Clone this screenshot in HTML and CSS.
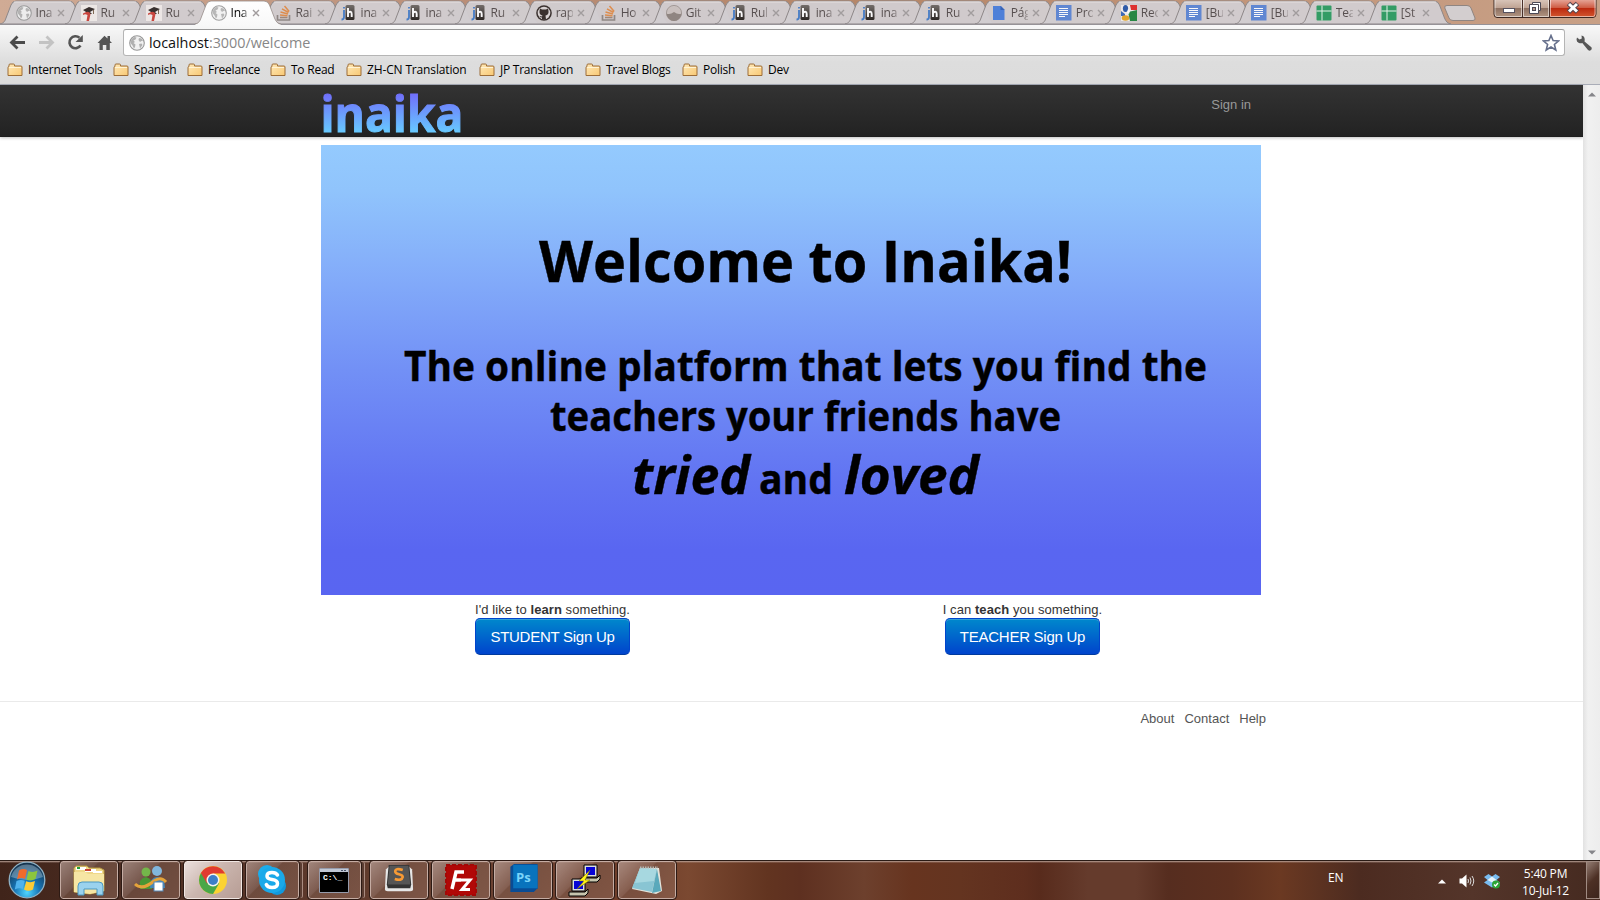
FILE: index.html
```html
<!DOCTYPE html>
<html lang="en">
<head>
<meta charset="utf-8">
<title>Inaika</title>
<link rel="stylesheet" href="styles.css">
</head>
<body>
<svg class="defs" width="0" height="0">
  <defs>
    <linearGradient id="gFolder" x1="0" y1="0" x2="1" y2="1"><stop offset="0" stop-color="#ffe9b8"/><stop offset="1" stop-color="#f8c873"/></linearGradient>
    <linearGradient id="gDark" x1="0" y1="0" x2="0" y2="1"><stop offset="0" stop-color="#6a6460"/><stop offset="1" stop-color="#1c1613"/></linearGradient>
    <linearGradient id="gActive" x1="0" y1="0" x2="0" y2="1"><stop offset="0" stop-color="#fff"/><stop offset="1" stop-color="#f8f8f8"/></linearGradient>
    <radialGradient id="gOrb" cx=".5" cy=".85" r=".8"><stop offset="0" stop-color="#4fd6ff"/><stop offset=".45" stop-color="#1673b4"/><stop offset="1" stop-color="#15344f"/></radialGradient>
  </defs>
  <symbol id="tab" viewBox="0 0 86 24"><path d="M0 24C4 23 5 21 6 18L11 5Q12.5 1 16 1H69Q73 1 74.500 5L79.500 18Q81.500 23.500 86 24Z" fill="#d1cdd0" fill-opacity=".96" stroke="#8d8788"/><path d="M14 2H71" stroke="#e6e0e0"/></symbol>
  <symbol id="tabOn" viewBox="0 0 86 25"><path d="M0 24.500C4 23.500 5 21 6 18L11 5Q12.500 1 16 1H69Q73 1 74.500 5L79.500 18Q81.500 24 86 24.500V25H0Z" fill="url(#gActive)"/><path d="M0 24C4 23 5 21 6 18L11 5Q12.500 1 16 1H69Q73 1 74.500 5L79.500 18Q81.500 23.500 86 24" fill="none" stroke="#968c88" stroke-width=".8"/></symbol>
  <symbol id="globe" viewBox="0 0 16 16"><circle cx="8" cy="8" r="7.300" fill="#f1f1f1" stroke="#969696" stroke-width="1.100"/><path d="M2.500 4L5.500 2 7.500 2.500 6.500 4.500 4.500 5.500 6 7 4.500 8 6.500 9.500 6 12 5 13.500 3.500 10.500 1.500 8ZM10 3L12.500 3.500 14 6 12.500 6 11 7 9.500 5ZM10 9L12.500 8.500 13.500 10 11 13.500 10.500 11Z" fill="#b0b0b0"/></symbol>
  <symbol id="grad" viewBox="0 0 16 16"><path d="M0 0H16V16H0Z" fill="#f0eae8"/><path d="M2 5L8 2 14 4 9 7 11 9 5 9 5 7Z" fill="#28201e"/><path d="M2 8.500Q8 5 9.500 9L8 16H5.500L6.500 10Q4 8.500 2 10Z" fill="#c8372f"/><path d="M12.500 5V9" stroke="#786048"/></symbol>
  <symbol id="so" viewBox="0 0 16 16"><path d="M1.500 10V15H13.500V10" fill="none" stroke="#88807e" stroke-width="1.700"/><path d="M4 12.500H11.500" stroke="#9a8070" stroke-width="1.600"/><path d="M4 10L11.500 10.700M4.500 7L12 9M6 3.800L12.500 7.500M8.500 1L13.200 6.500" stroke="#df8741" stroke-width="1.500"/></symbol>
  <symbol id="jh" viewBox="0 0 16 16"><rect x="4.500" y="0" width="9" height="15" rx="1.500" fill="url(#gDark)"/><path d="M3 5V12Q3 14.500 .5 14.500M3 2V3.600" fill="none" stroke="#3774c6" stroke-width="1.800"/><path d="M7 3V12M7 8Q8 6.500 9.500 6.800 10.700 7 10.700 9V12" fill="none" stroke="#fff" stroke-width="1.900"/></symbol>
  <symbol id="gh" viewBox="0 0 16 16"><circle cx="8" cy="8" r="7.800" fill="#2a211e"/><circle cx="8" cy="8" r="6.300" fill="#d8d2d2"/><path d="M4 3.500L6 4.600H10L12 3.500 12.500 6Q13 10 9.500 10.400L10 14.500H6V12.600Q4 12.600 3.500 11L6 11.500 6.500 10.400Q3 10 3.500 6Z" fill="#2a211e"/></symbol>
  <symbol id="gitb" viewBox="0 0 16 16"><circle cx="8" cy="8" r="7.600" fill="#c9c0bd" stroke="#928884" stroke-width=".8"/><path d="M.5 8.500Q4 10 8 7 12 10 15.500 8.500A7.500 7.500 0 0 1 .5 8.500Z" fill="#897e79"/></symbol>
  <symbol id="page" viewBox="0 0 16 16"><path d="M2 1H10L13.500 4.500V15H2Z" fill="#4178da"/><path d="M9.500 1V5H13.500Z" fill="#2858b0"/></symbol>
  <symbol id="doc" viewBox="0 0 16 16"><path d="M0 0H15.500V15.500H0Z" fill="#5480d3"/><path d="M3 3.500H12M3 5.500H12M3 7.500H12M3 9.500H12M3 11.500H9" stroke="#fff"/></symbol>
  <symbol id="goo" viewBox="0 0 16 16"><path d="M0 0H16V16H0Z" fill="#f2eeee"/><path d="M9 0H16V5H10Z" fill="#df201d"/><path d="M7 7L16 5V16H9Z" fill="#168036"/><path d="M0 6L4 9V11H0Z" fill="#2f61b5"/><ellipse cx="4.500" cy="3.500" rx="2.600" ry="3.500" fill="#1f51a5"/><ellipse cx="4.500" cy="13" rx="3.800" ry="2.700" fill="#e3a21c"/><path d="M7 4L9 6 8 9 6 8Z" fill="#fff"/></symbol>
  <symbol id="sheet" viewBox="0 0 16 16"><rect x=".5" y=".5" width="15" height="15" rx="1" fill="#23985a"/><path d="M6 .5V15.500M.5 6H15.500" stroke="#e8f5ec"/></symbol>
  <symbol id="x" viewBox="0 0 8 8"><path d="M1 1L7 7M7 1L1 7" stroke="#a19c9d" stroke-width="1.400"/></symbol>
  <symbol id="folder" viewBox="0 0 16 14"><path d="M1 12.500V4.500Q1 3.500 2 3.500V2Q2 1 3 1H6.500Q7.500 1 7.500 2V3H14Q15 3 15 4V12.500Z" fill="url(#gFolder)" stroke="#9c6d38"/><path d="M2 4.500H14" stroke="#fff3d5"/></symbol>
</svg>

<header class="browser">
  <div class="titlebar">
    <nav class="tabs">
      <div class="tab"><svg class="shape"><use href="#tab"/></svg><svg class="fav"><use href="#globe"/></svg><span>Ina</span><svg class="close"><use href="#x"/></svg></div>
      <div class="tab"><svg class="shape"><use href="#tab"/></svg><svg class="fav"><use href="#grad"/></svg><span>Ru</span><svg class="close"><use href="#x"/></svg></div>
      <div class="tab"><svg class="shape"><use href="#tab"/></svg><svg class="fav"><use href="#grad"/></svg><span>Ru</span><svg class="close"><use href="#x"/></svg></div>
      <div class="tab on"><svg class="shape"><use href="#tabOn"/></svg><svg class="fav"><use href="#globe"/></svg><span>Ina</span><svg class="close"><use href="#x"/></svg></div>
      <div class="tab"><svg class="shape"><use href="#tab"/></svg><svg class="fav"><use href="#so"/></svg><span>Rai</span><svg class="close"><use href="#x"/></svg></div>
      <div class="tab"><svg class="shape"><use href="#tab"/></svg><svg class="fav"><use href="#jh"/></svg><span>ina</span><svg class="close"><use href="#x"/></svg></div>
      <div class="tab"><svg class="shape"><use href="#tab"/></svg><svg class="fav"><use href="#jh"/></svg><span>ina</span><svg class="close"><use href="#x"/></svg></div>
      <div class="tab"><svg class="shape"><use href="#tab"/></svg><svg class="fav"><use href="#jh"/></svg><span>Ru</span><svg class="close"><use href="#x"/></svg></div>
      <div class="tab"><svg class="shape"><use href="#tab"/></svg><svg class="fav"><use href="#gh"/></svg><span>rap</span><svg class="close"><use href="#x"/></svg></div>
      <div class="tab"><svg class="shape"><use href="#tab"/></svg><svg class="fav"><use href="#so"/></svg><span>Ho</span><svg class="close"><use href="#x"/></svg></div>
      <div class="tab"><svg class="shape"><use href="#tab"/></svg><svg class="fav"><use href="#gitb"/></svg><span>Git</span><svg class="close"><use href="#x"/></svg></div>
      <div class="tab"><svg class="shape"><use href="#tab"/></svg><svg class="fav"><use href="#jh"/></svg><span>Rul</span><svg class="close"><use href="#x"/></svg></div>
      <div class="tab"><svg class="shape"><use href="#tab"/></svg><svg class="fav"><use href="#jh"/></svg><span>ina</span><svg class="close"><use href="#x"/></svg></div>
      <div class="tab"><svg class="shape"><use href="#tab"/></svg><svg class="fav"><use href="#jh"/></svg><span>ina</span><svg class="close"><use href="#x"/></svg></div>
      <div class="tab"><svg class="shape"><use href="#tab"/></svg><svg class="fav"><use href="#jh"/></svg><span>Ru</span><svg class="close"><use href="#x"/></svg></div>
      <div class="tab"><svg class="shape"><use href="#tab"/></svg><svg class="fav"><use href="#page"/></svg><span>Pág</span><svg class="close"><use href="#x"/></svg></div>
      <div class="tab"><svg class="shape"><use href="#tab"/></svg><svg class="fav"><use href="#doc"/></svg><span>Pro</span><svg class="close"><use href="#x"/></svg></div>
      <div class="tab"><svg class="shape"><use href="#tab"/></svg><svg class="fav"><use href="#goo"/></svg><span>Rec</span><svg class="close"><use href="#x"/></svg></div>
      <div class="tab"><svg class="shape"><use href="#tab"/></svg><svg class="fav"><use href="#doc"/></svg><span>[Bu</span><svg class="close"><use href="#x"/></svg></div>
      <div class="tab"><svg class="shape"><use href="#tab"/></svg><svg class="fav"><use href="#doc"/></svg><span>[Bu</span><svg class="close"><use href="#x"/></svg></div>
      <div class="tab"><svg class="shape"><use href="#tab"/></svg><svg class="fav"><use href="#sheet"/></svg><span>Tea</span><svg class="close"><use href="#x"/></svg></div>
      <div class="tab"><svg class="shape"><use href="#tab"/></svg><svg class="fav"><use href="#sheet"/></svg><span>[St</span><svg class="close"><use href="#x"/></svg></div>
    </nav>
    <svg class="newtab" width="32" height="16"><path d="M3 .5H23Q26 .5 27 3L31 13Q31.500 15.500 29 15.500H9Q6 15.500 5 13L.8 3Q0 .5 3 .5Z" fill="#d3cecf" stroke="#8f8581"/></svg>
    <svg class="winctl" width="104" height="19">
      <defs><linearGradient id="gWin" x1="0" y1="0" x2="0" y2="1"><stop offset="0" stop-color="#dbc8bd"/><stop offset=".48" stop-color="#bfa393"/><stop offset=".5" stop-color="#8c6f60"/><stop offset="1" stop-color="#b49784"/></linearGradient>
      <linearGradient id="gRed" x1="0" y1="0" x2="0" y2="1"><stop offset="0" stop-color="#e5a294"/><stop offset=".46" stop-color="#ce5b43"/><stop offset=".5" stop-color="#bc2a10"/><stop offset="1" stop-color="#d2562e"/></linearGradient></defs>
      <path d="M1 -1V14Q1 17.500 4 17.500H100Q103 17.500 103 14V-1Z" fill="url(#gWin)" stroke="#3d2822"/>
      <path d="M56 0H102.500V14Q102.500 17 100 17H56Z" fill="url(#gRed)"/>
      <path d="M29.500 0V17M56.500 0V17" stroke="#49302a"/><path d="M2 0V14Q2 16.500 4 16.500H28.500V0M30.500 0V16.500H55.500V0M57.500 0V16.500H100Q102 16.500 102 14V0" fill="none" stroke="#fff" stroke-opacity=".55"/>
      <rect x="10.500" y="8.500" width="11" height="4" fill="#fff" stroke="#565260"/>
      <path d="M39.500 2.500H47.500V10.500H45.500V13.500H36.500V4.500H39.500Z" fill="#fff" stroke="#4c4955"/><path d="M39.500 4.500H45.500V10.500" fill="none" stroke="#4c4955"/><rect x="39.500" y="7.500" width="3" height="3" fill="#b79a8b" stroke="#4c4955"/>
      <path d="M75.500 3.500L84.500 12M84.500 3.500L75.500 12" stroke="#52454e" stroke-width="5"/><path d="M76 4L84 11.500M84 4L76 11.500" stroke="#fff" stroke-width="3"/>
    </svg>
  </div>
  <div class="toolbar">
    <svg class="navicons" width="124" height="34">
      <path d="M25 17.500H12M17.500 11.500L11.500 17.500 17.500 23.500" fill="none" stroke="#4b4b4b" stroke-width="2.800"/>
      <path d="M39 17.500H52M46.500 11.500L52.500 17.500 46.500 23.500" fill="none" stroke="#c3c3c3" stroke-width="2.800"/>
      <path d="M80.500 20.500A6 6 0 1 1 79.500 12.800" fill="none" stroke="#555" stroke-width="2.600"/><path d="M82.800 10V17H75.500Z" fill="#555"/>
      <path d="M97.500 18L104.500 10.700 107.500 13.500V11H110V16L112 18H109.800V25H106.300V20H102.800V25H99.500V18Z" fill="#555"/>
    </svg>
    <div class="omnibox">
      <svg class="site"><use href="#globe"/></svg><p class="url"><b>localhost</b>:3000/welcome</p>
      <svg class="star" width="18" height="18" viewBox="0 0 18 18"><path d="M9 1.500L11.100 6.500 16.600 6.900 12.400 10.500 13.800 16 9 13 4.200 16 5.600 10.500 1.400 6.900 6.900 6.500Z" fill="#fff" stroke="#656f8b" stroke-width="1.600"/></svg>
    </div>
    <svg class="wrench" width="16" height="16" viewBox="0 0 16 16"><path d="M5.500.5L5.800 3.500 3.500 4.500 1 2.500Q-.5 6.500 3 8 5 8.500 6.300 8L12 15Q14.200 16.500 15.500 14.500 16.300 12.500 14.500 11.500L8.500 6.500Q9.500 1 5.500.5Z" fill="#575757"/></svg>
  </div>
  <nav class="bookmarks">
    <a><svg><use href="#folder"/></svg>Internet Tools</a>
    <a><svg><use href="#folder"/></svg>Spanish</a>
    <a><svg><use href="#folder"/></svg>Freelance</a>
    <a><svg><use href="#folder"/></svg>To Read</a>
    <a><svg><use href="#folder"/></svg>ZH-CN Translation</a>
    <a><svg><use href="#folder"/></svg>JP Translation</a>
    <a><svg><use href="#folder"/></svg>Travel Blogs</a>
    <a><svg><use href="#folder"/></svg>Polish</a>
    <a><svg><use href="#folder"/></svg>Dev</a>
  </nav>
</header>

<div class="viewport">
  <div class="site-page">
    <div class="navbar">
      <div class="container">
        <svg class="logo" width="150" height="52" viewBox="0 0 150 52">
          <defs><linearGradient id="gLogo" gradientUnits="userSpaceOnUse" x1="0" y1="9" x2="0" y2="48"><stop offset="0" stop-color="#706ffb"/><stop offset="1" stop-color="#67cbff"/></linearGradient></defs>
          <text x="-.5" y="47" textLength="143" lengthAdjust="spacingAndGlyphs" fill="url(#gLogo)" stroke="url(#gLogo)">inaika</text>
        </svg>
        <a class="signin">Sign in</a>
      </div>
    </div>
    <main class="container">
      <svg class="hero" width="940" height="450" viewBox="321 145 940 450">
        <defs><linearGradient id="gHero" x1="0" y1="0" x2="0" y2="1"><stop offset="0" stop-color="#94cafe"/><stop offset=".1" stop-color="#90c4fc"/><stop offset=".25" stop-color="#86b1fa"/><stop offset=".5" stop-color="#7290f6"/><stop offset=".75" stop-color="#6173f2"/><stop offset=".9" stop-color="#5966f1"/><stop offset="1" stop-color="#5965f1"/></linearGradient></defs>
        <rect x="321" y="145" width="940" height="450" fill="url(#gHero)"/>
        <text x="539" y="282" font-size="57" textLength="533" lengthAdjust="spacingAndGlyphs">Welcome to Inaika!</text>
        <text x="404" y="381" font-size="40.500" textLength="803" lengthAdjust="spacingAndGlyphs">The online platform that lets you find the</text>
        <text x="550" y="430.500" font-size="40.500" textLength="511" lengthAdjust="spacingAndGlyphs">teachers your friends have</text>
        <text class="it" x="632" y="493.500" font-size="52" textLength="118" lengthAdjust="spacingAndGlyphs">tried</text>
        <text x="759" y="493.500" font-size="40.500" textLength="74" lengthAdjust="spacingAndGlyphs">and</text>
        <text class="it" x="844" y="493.500" font-size="52" textLength="135" lengthAdjust="spacingAndGlyphs">loved</text>
      </svg>
      <div class="signup">
        <div><p>I'd like to <b>learn</b> something.</p><a class="btn">STUDENT Sign Up</a></div>
        <div><p>I can <b>teach</b> you something.</p><a class="btn">TEACHER Sign Up</a></div>
      </div>
    </main>
    <footer><a>About</a><a>Contact</a><a>Help</a></footer>
  </div>
  <div class="scrollbar">
    <svg width="8" height="5"><path d="M0 4.500L4 .5 8 4.500Z" fill="#85858a"/></svg>
    <svg width="8" height="5"><path d="M0 .5L4 4.500 8 .5Z" fill="#85858a"/></svg>
  </div>
</div>

<div class="taskbar">
  <svg class="orb" width="38" height="38" viewBox="0 0 38 38"><circle cx="19" cy="19" r="17.800" fill="url(#gOrb)" stroke="#8fb1c4" stroke-width="1.300"/><path d="M3 16A16.500 16.500 0 0 1 35 16Q20 22 3 16Z" fill="#c5dcea" fill-opacity=".38"/><path d="M11 9.500Q15 7 19 9L17 18Q13 16 9 18.500Z" fill="#f06b2c"/><path d="M20.500 10Q25 12 29.500 9.500L27.500 18Q23 20.500 18.500 18.500Z" fill="#8cc63d"/><path d="M8.500 20Q13 18 16.800 19.800L14.800 28Q11 26.500 6.800 28.500Z" fill="#4fb2ed"/><path d="M18.200 20.200Q22.500 22.200 27 20L25 28.500Q20.500 31 16 28.500Z" fill="#fccb35"/></svg>
  <div class="tasks">
    <div class="task">
      <svg width="36" height="32" viewBox="0 0 36 32"><path d="M3 4L5 2H16L18 4H29L33 6V27L19 30 3 28Z" fill="#efd88a" stroke="#b6963f"/><path d="M5 3H15V6H5ZM14 5H25V8H14ZM22 7H31V9H22Z" fill="#fff"/><path d="M6 3H9V5H6Z" fill="#23a03a"/><path d="M14 5H20V7H14Z" fill="#ca4433"/><path d="M3 8H14L17 10H33V27L19 30 3 28Z" fill="#f6e6a4"/><path d="M7 31V22Q7 18 11 18H28Q32 18 32 22V31H26V25H13V31Z" fill="#9ad2ee" stroke="#4b98c1"/></svg>
    </div>
    <div class="task">
      <svg width="34" height="32" viewBox="0 0 34 32"><circle cx="12" cy="8" r="4.500" fill="#74b64a"/><path d="M6 25Q4 14 12 13 19 14 18 25Z" fill="#4a9634"/><circle cx="23" cy="7" r="5" fill="#81b6dc"/><path d="M16 24Q16 13 23 13 31 13 31 24Z" fill="#4688ba"/><path d="M1 20Q8 27 20 17 27 12 32 18" fill="none" stroke="#e4a33a" stroke-width="3"/><rect x="20" y="18" width="9" height="9" fill="#fff" stroke="#5286b3"/></svg>
    </div>
    <div class="task lit">
      <svg width="32" height="32" viewBox="0 0 32 32"><circle cx="16" cy="16" r="14" fill="#fbd332"/><path d="M16 16L3.900 9A14 14 0 0 0 16 30L22 19.500Z" fill="#49a748"/><path d="M3.900 9A14 14 0 0 1 28.200 9.500H16L10 19.500Z" fill="#e03b30"/><circle cx="16" cy="16" r="6.500" fill="#f7f4ee"/><circle cx="16" cy="16" r="5" fill="#3d7fc8"/></svg>
    </div>
    <div class="task stack">
      <svg width="32" height="32" viewBox="0 0 32 32"><circle cx="11" cy="10" r="9" fill="#1cadec"/><circle cx="21" cy="22" r="9" fill="#1199dd"/><circle cx="16" cy="16" r="13" fill="#1aa9e9"/><path d="M21.500 11Q20 8.500 16 8.500 11 8.500 11 12 11 14.800 16 15.500 21.500 16.300 21.500 19.500 21.500 23.500 16 23.500 11.500 23.500 10.300 20.500" fill="none" stroke="#fff" stroke-width="3.500" stroke-linecap="round"/></svg>
    </div>
    <div class="task stack">
      <svg width="30" height="25" viewBox="0 0 30 25"><path d="M.5.5H29.500V24.500H.5Z" fill="#000" stroke="#969bab"/><path d="M1 1H29V4H1Z" fill="#c0c7d4"/><path d="M22 2.500H24M25 2.500H27" stroke="#47536a"/><text class="cmd" x="4" y="12">C:\_</text></svg>
    </div>
    <div class="task">
      <svg class="lift" width="32" height="30" viewBox="0 0 32 32"><path d="M2 7L5 4H27L30 7 31 28Q31 30 28 30H4Q1 30 1 28Z" fill="#e6e6e6"/><path d="M5 2H27L29 23 28 27H4L3 23Z" fill="#333"/><path d="M6 3H26L28 23H4Z" fill="#555"/><path d="M20 7.500Q12 5 12 9 12 11 16 12 20 13 20 15 19 19.500 11.500 17" fill="none" stroke="#f79a35" stroke-width="2.800"/></svg>
    </div>
    <div class="task">
      <svg width="34" height="34" viewBox="0 0 34 34"><rect x="2" y="2" width="30" height="30" fill="#b10806" stroke="#a30806" stroke-width="2" stroke-dasharray="4 2"/><path d="M8 26L12 9H20M10 17H17" fill="none" stroke="#fff" stroke-width="3.500"/><path d="M17 17H26L18 26.500H26" fill="none" stroke="#fff" stroke-width="3"/></svg>
    </div>
    <div class="task">
      <svg class="lift" width="31" height="30" viewBox="0 0 32 32"><path d="M2 4L6 1H31V27L27 31H2Z" fill="#0a4c94"/><path d="M5 2H31V27H5Z" fill="#0873bd"/><text class="ps" x="8" y="20.500">Ps</text></svg>
    </div>
    <div class="task">
      <svg width="34" height="34" viewBox="0 0 34 34"><g id="pc"><path d="M16 2H29V14H16Z" fill="#ddd" stroke="#000"/><path d="M18 4H27V12H18Z" fill="#0703d6"/><path d="M13 15H29L32 12V16L29 19H13Z" fill="#c7c5ae" stroke="#000"/></g><use href="#pc" x="-12" y="14"/><path d="M22 7L11 18H16L9 26 22 17H17Z" fill="#fff519" stroke="#756b00" stroke-width=".5"/></svg>
    </div>
    <div class="task">
      <svg width="34" height="32" viewBox="0 0 34 32"><path d="M10 4L29 4 32 27 26 30 2 25Z" fill="#e4e4dc"/><path d="M10 4L27 5 22 28 2 24Z" fill="#89c5d3"/><path d="M10 4L27 5 24 17 5 19Z" fill="#b4dfe6" fill-opacity=".7"/><path d="M27 5L31 27 22 29Z" fill="#5aa9bb"/><path d="M10 3.500H28" stroke="#b4b7b4" stroke-width="2" stroke-dasharray="1.500 1"/></svg>
    </div>
  </div>
  <div class="tray">
    <span class="lang">EN</span>
    <svg class="up" width="8" height="5"><path d="M0 4.500L4 .5 8 4.500Z" fill="#fff"/></svg>
    <svg class="vol" width="16" height="16" viewBox="0 0 16 16"><path d="M.5 5.500H3L7.500 1.500V14.500L3 10.500H.5Z" fill="#fff"/><path d="M9 6Q10 8 9 10M11 4.500Q13 8 11 11.500M13 3Q16.500 8 13 13" fill="none" stroke="#ddd"/></svg>
    <svg class="drop" width="17" height="16" viewBox="0 0 17 16"><path d="M4.500 1L8 3.500 11.500 1 16 4 12.500 7 16 9.500 12 12 8 14.500 4 12 0 9.500 3.500 7 0 4Z" fill="#79bcf0"/><path d="M8 3.500L12.500 7 8 9.500 3.500 7Z" fill="#e5f4fd"/><circle cx="12" cy="11.500" r="4" fill="#2ca536"/><path d="M10 11.500L11.500 13 14 10" fill="none" stroke="#fff" stroke-width="1.300"/></svg>
    <div class="clock"><span>5:40 PM</span><span>10-Jul-12</span></div>
    <div class="peek"></div>
  </div>
</div>
</body>
</html>
```

FILE: styles.css
```css
* { box-sizing: border-box; }
body { margin: 0; width: 1600px; height: 900px; overflow: hidden; background: #fff; display: flex; flex-direction: column; font-family: "Liberation Sans", Arial, sans-serif; font-size: 13px; line-height: 18px; color: #333; }
p { margin: 0; }
svg { display: block; flex: none; }
.defs { position: absolute; }

.browser { flex: none; height: 85px; background: linear-gradient(#f8f8f8 25px, #ddd 62px, #dcdcdc); border-bottom: 1px solid #a9adb8; font-family: "Open Sans", "Noto Sans", sans-serif; }
.titlebar { height: 25px; display: flex; align-items: flex-start; background: linear-gradient(90deg, #d0ab95, #b98d76 30%, #b58668 55%, #c19478 75%, #c8a086); border-bottom: 1px solid #969297; }
.tabs { display: flex; flex: none; }
.tab { position: relative; width: 65.03px; height: 25px; padding: 5px 0 0 16px; display: flex; align-items: flex-start; }
.tab .shape { position: absolute; left: 0; top: 0; width: 86px; height: 24px; z-index: 0; }
.tab .fav { position: relative; width: 16px; height: 16px; opacity: .9; }
.tab span { position: relative; width: 17px; margin-left: 3.500px; overflow: hidden; white-space: nowrap; font-size: 12px; line-height: 16px; letter-spacing: -.2px; color: #574f4f; -webkit-mask-image: linear-gradient(90deg, #000 65%, #0004); mask-image: linear-gradient(90deg, #000 65%, #0004); }
.tab .close { position: relative; width: 8px; height: 8px; margin: 4px 0 0 4px; }
.tab.on { z-index: 2; }
.tab.on .shape { height: 25px; }
.tab.on span { color: #000; }
.newtab { margin: 5px 0 0 14px; }
.winctl { margin-left: auto; margin-right: 3px; }

.toolbar { height: 34px; display: flex; align-items: flex-start; }
.omnibox { width: 1442px; height: 27px; margin: 4px 0 0 -1px; padding: 0 4px 0 5px; display: flex; align-items: center; background: #fff; border: 1px solid #b5b5b5; border-top-color: #999; border-radius: 3px; }
.site { width: 16px; height: 16px; }
.url { margin-left: 4px; font-size: 14.400px; letter-spacing: -.04px; color: #878787; }
.url b { font-weight: 400; color: #111; }
.star { margin-left: auto; }
.wrench { margin: 10px 0 0 11px; }

.bookmarks { display: flex; padding: 2px 0 0 7px; height: 25px; font-size: 12px; color: #000; }
.bookmarks a { display: flex; align-items: center; height: 18px; white-space: nowrap; letter-spacing: -.24px; flex: none; }
.bookmarks svg { width: 16px; height: 14px; margin-right: 5px; }
.bookmarks a:nth-child(1) { width: 106px; }
.bookmarks a:nth-child(2) { width: 74px; }
.bookmarks a:nth-child(3) { width: 83px; }
.bookmarks a:nth-child(4) { width: 76px; }
.bookmarks a:nth-child(5) { width: 133px; letter-spacing: -.15px; }
.bookmarks a:nth-child(6) { width: 106px; }
.bookmarks a:nth-child(7) { width: 97px; }
.bookmarks a:nth-child(8) { width: 65px; }

.viewport { flex: none; height: 775px; display: flex; }
.site-page { width: 1583px; }
.container { width: 940px; margin: 0 0 0 321px; }
.navbar { height: 52px; background: linear-gradient(#333, #222); box-shadow: 0 1px 3px rgba(0,0,0,.25), inset 0 -1px 0 rgba(0,0,0,.1); }
.navbar .container { display: flex; justify-content: space-between; }
.logo text { font: 700 50px "Open Sans", "Noto Sans", sans-serif; }
.signin { margin: 11px 10px 0 0; color: #999; }
.hero { margin-top: 8px; font-family: "Open Sans", "Noto Sans", sans-serif; font-weight: 700; fill: #000; stroke: #000; stroke-width: .4px; }
.hero rect { stroke: none; }
.hero .it { font-style: italic; }
.signup { display: flex; padding: 6px 0 0; width: 940px; height: 106px; }
.signup > div { flex: 0 0 470px; width: 470px; padding-right: 7px; text-align: center; }
.signup p { line-height: 17px; letter-spacing: .08px; }
.btn { display: inline-block; width: 155px; height: 37px; padding: 9px 0; border: 1px solid #0044cc; border-bottom-color: #003a9e; border-radius: 5px; background: linear-gradient(#0088cc, #0044cc); box-shadow: inset 0 1px 0 rgba(255,255,255,.2); color: #fff; font-size: 15px; letter-spacing: -.26px; line-height: 18px; white-space: nowrap; }
footer { border-top: 1px solid #eaeaea; display: flex; justify-content: flex-end; gap: 10px; padding: 8px 317px 0 0; color: #555; }
.scrollbar { width: 17px; background: linear-gradient(90deg, #e2e2e2, #f1f1f1 30%, #ededed); display: flex; flex-direction: column; justify-content: space-between; align-items: center; padding: 7px 0 5px; }

.taskbar { flex: none; height: 40px; display: flex; align-items: flex-start; background: linear-gradient(#2a1b15 1px, #bba297 1px, #bba29700 3px), linear-gradient(90deg, #40241a, #4f2f24 10%, #6b4232 30%, #6f3d29 40%, #7b4931 43%, #623420 48%, #5e3020 50%, #6d402d 54%, #67341f 57%, #643420 60%, #5e2e1e 64%, #582b1c 65%, #653b2c 68%, #653b2c 71%, #562d1f 73%, #5d301f 77%, #6b3922 80%, #4c2b20 85%, #54352a 92%, #452a20); }
.orb { margin: 1px 0 0 8px; }
.tasks { display: flex; gap: 3.700px; margin: 1px 0 0 14px; }
.task { width: 58.300px; height: 38px; border: 1px solid #c5aca3; outline: 1px solid #2d1a14; outline-offset: 0; border-radius: 3px; background: linear-gradient(135deg, #c3aca4aa, #9a7a6f88 40%, #825f5088 42%, #90695a88); display: flex; align-items: center; justify-content: center; }
.task.lit { background: linear-gradient(135deg, #eadfdc, #cbb6af 45%, #b79d94); border-color: #f1e7e3; }
.task.stack { width: 53px; margin-right: 5.300px; box-shadow: 4px 0 0 -1px #5a3c31, 5px 0 0 -1px #a98b80; }
.lift { margin-bottom: 4px; }
.cmd { font: 700 8px "Liberation Mono", monospace; fill: #fff; }
.ps { font: 700 14px "Open Sans", sans-serif; fill: #7ad4fa; }
.tray { margin-left: auto; height: 40px; display: flex; align-items: flex-start; font-family: "Open Sans", "Noto Sans", sans-serif; font-size: 12px; letter-spacing: -.2px; color: #fff; }
.lang { width: 110px; margin-top: 9px; }
.up { margin-top: 19px; }
.vol { margin: 13px 0 0 13px; }
.drop { margin: 13px 0 0 9px; }
.clock { width: 85px; margin-top: 5px; padding-left: 4px; text-align: center; display: flex; flex-direction: column; line-height: 17px; }
.peek { width: 14px; height: 38px; margin: 1px 0 0; border: 1px solid #a08b82; background: linear-gradient(135deg, #947d73, #4d3025 50%, #3d251c); }
```
